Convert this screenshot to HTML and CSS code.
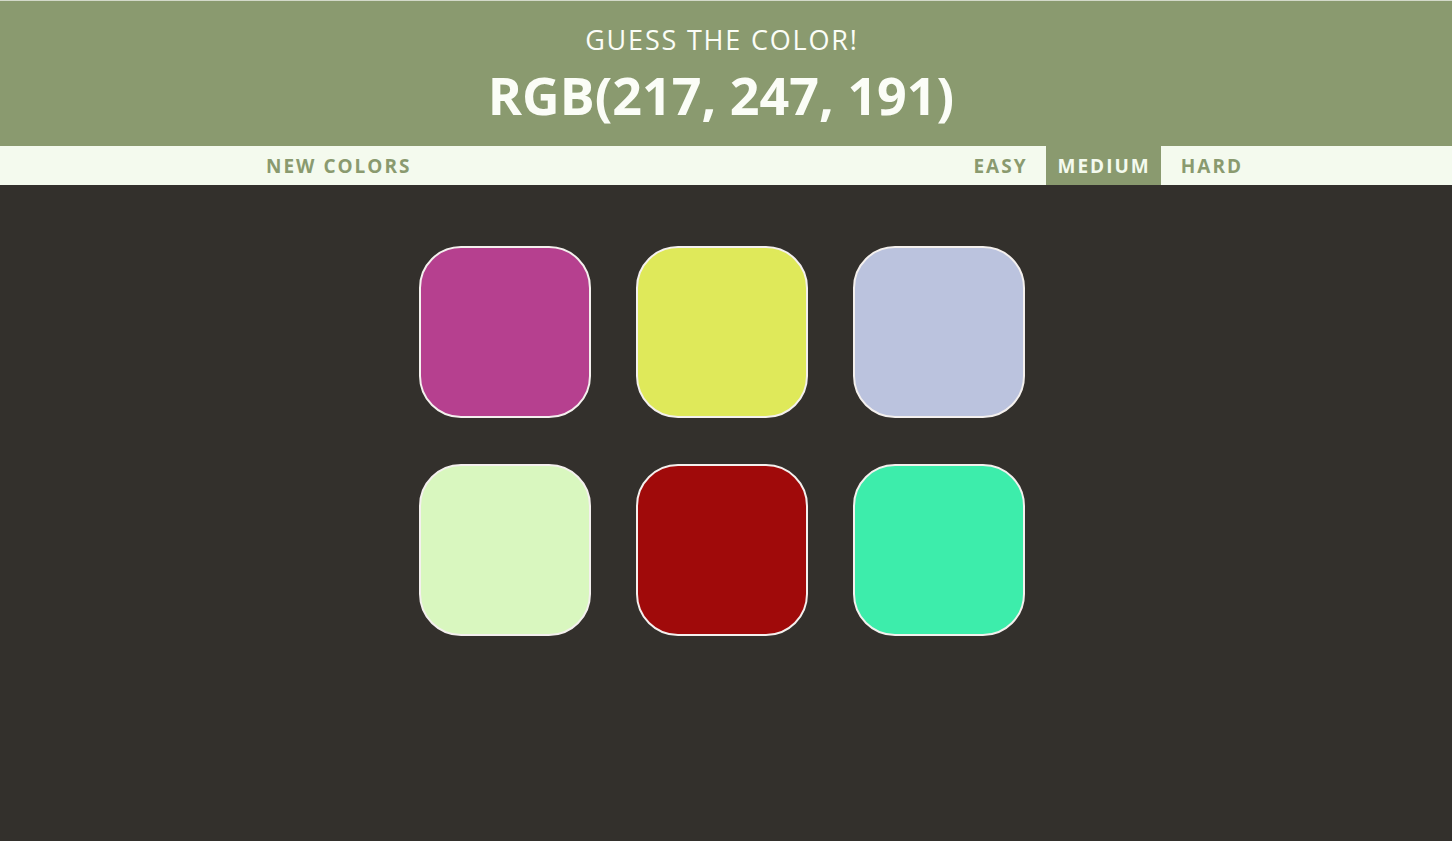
FILE: index.html
```html
<!DOCTYPE html>
<html lang="en">
<head>
<meta charset="utf-8">
<title>Color Game</title>
<link rel="stylesheet" href="styles.css">
</head>
<body>
<header class="header">
  <h1 class="title">
    <span class="title-sub">GUESS THE COLOR!</span>
    <span class="title-rgb">RGB(217, 247, 191)</span>
  </h1>
</header>
<nav class="stripe">
  <div class="stripe-inner">
    <button class="btn btn-new">NEW COLORS</button>
    <div class="modes">
      <button class="btn">EASY</button>
      <button class="btn btn-active">MEDIUM</button>
      <button class="btn">HARD</button>
    </div>
  </div>
</nav>
<main class="board">
  <div class="grid">
    <div class="square sq-magenta"></div>
    <div class="square sq-yellow"></div>
    <div class="square sq-lavender"></div>
    <div class="square sq-mint"></div>
    <div class="square sq-red"></div>
    <div class="square sq-teal"></div>
  </div>
</main>
</body>
</html>
```

FILE: styles.css
```css
* { box-sizing: border-box; }
html, body { margin: 0; padding: 0; }
body {
  background: #33302c;
  font-family: "Open Sans", "Liberation Sans", sans-serif;
  min-height: 841px;
  border-top: 1px solid #d3d9c9;
}
.header {
  background: #8a9a6f;
  height: 145px;
  padding-right: 10px;
  text-align: center;
  color: #fbfdf7;
}
.title {
  margin: 0;
  padding-top: 20px;
  display: flex;
  flex-direction: column;
  align-items: center;
  font-weight: normal;
}
.title-sub {
  font-size: 27px;
  line-height: 38px;
  letter-spacing: 1.8px;
  font-weight: 400;
  margin-right: -1.8px;
}
.title-rgb {
  font-size: 52px;
  line-height: 72px;
  font-weight: 700;
  letter-spacing: 0;
}
.stripe {
  background: #f4faee;
  height: 39px;
}
.stripe-inner {
  display: flex;
  justify-content: space-between;
  height: 100%;
  padding-left: 254px;
  padding-right: 199px;
}
.modes {
  display: flex;
  gap: 8px;
  height: 100%;
}
.btn {
  border: none;
  background: transparent;
  color: #8a9a6f;
  font-family: "Open Sans", "Liberation Sans", sans-serif;
  font-weight: 700;
  font-size: 19px;
  letter-spacing: 2px;
  height: 100%;
  padding: 0 10px 0 12px;
  margin: 0;
}
.btn-active {
  background: #8a9a6f;
  color: #f4faee;
}
.board {
  padding-top: 61px;
  padding-right: 8px;
  display: flex;
  justify-content: center;
}
.grid {
  display: grid;
  grid-template-columns: repeat(3, 172px);
  column-gap: 45px;
  row-gap: 46px;
}
.square {
  width: 172px;
  height: 172px;
  border: 2px solid #f4f0ee;
  border-radius: 42px;
}
.sq-magenta { background: #b6408f; }
.sq-yellow { background: #dfe95a; }
.sq-lavender { background: #bbc3de; }
.sq-mint { background: #d9f7bf; }
.sq-red { background: #a00a0a; }
.sq-teal { background: #3dedab; }
```
